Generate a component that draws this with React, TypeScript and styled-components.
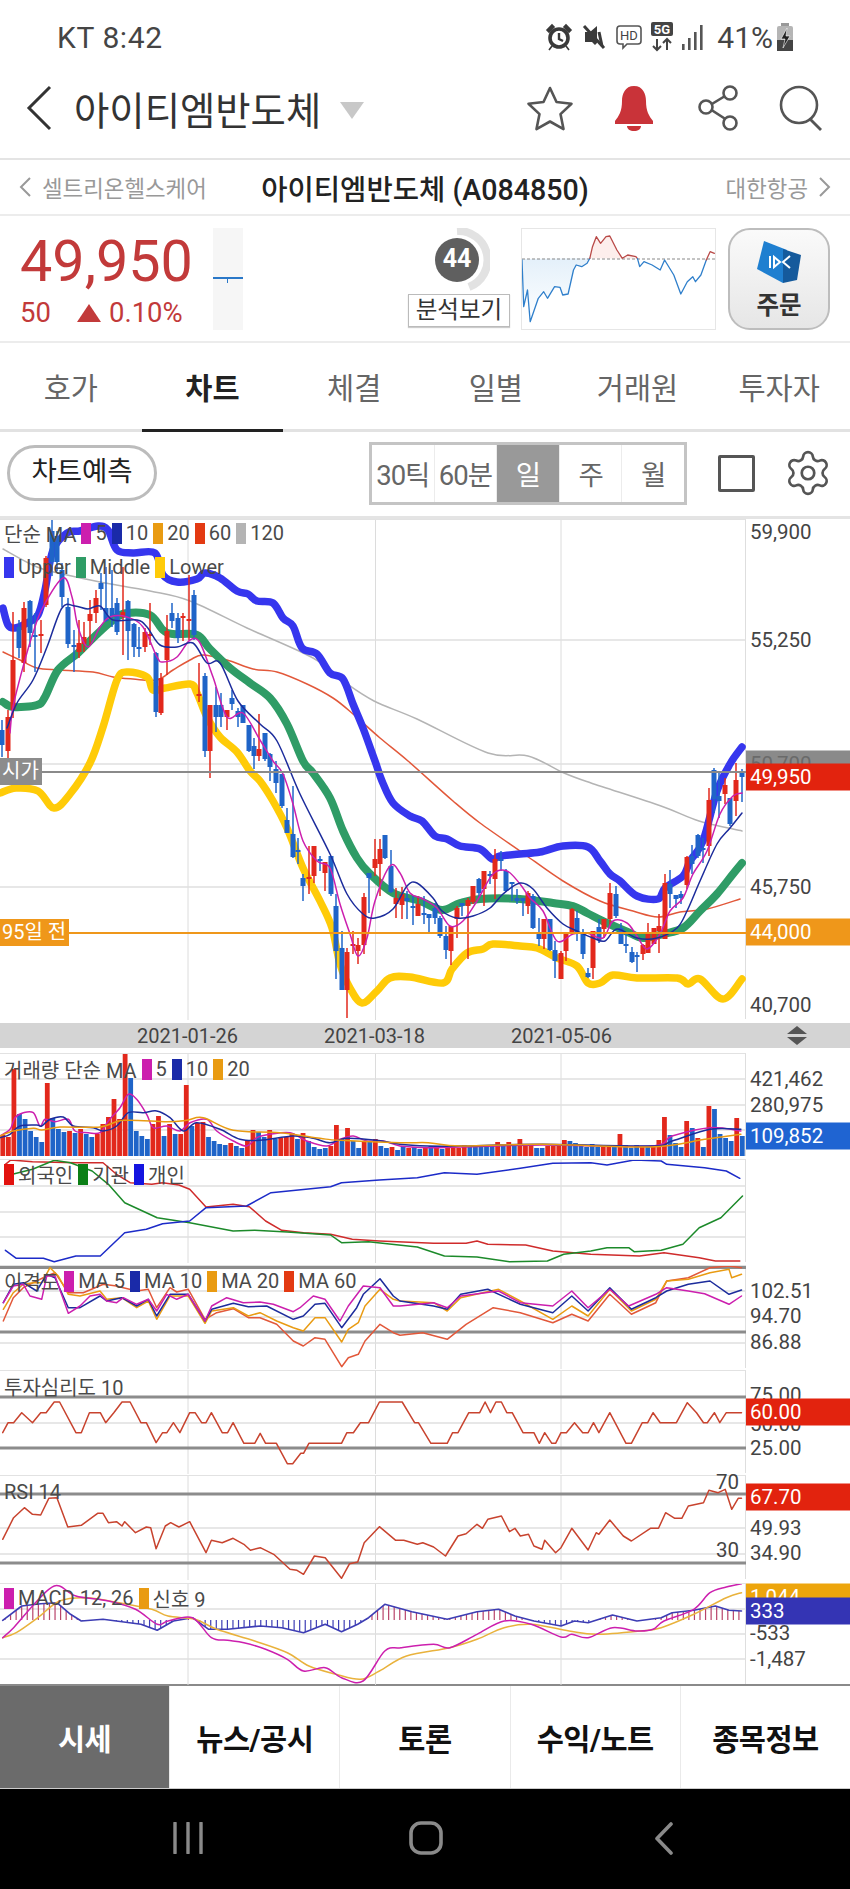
import React from 'react';
import styled, { createGlobalStyle } from 'styled-components';
import { Settings } from 'lucide-react';

const GlobalStyle = createGlobalStyle`
  html, body {
    margin: 0;
    padding: 0;
    background: #fff;
  }
  * { box-sizing: border-box; }
  #root {
    width: 850px;
    height: 1889px;
    overflow: hidden;
    font-family: Roboto, "Noto Sans CJK KR", sans-serif;
  }
`;

// ---- chart data, traced in page pixels ----

const trace = (ox: number, oy: number, sx: number, sy: number, s: string) =>
  s.trim().split(/\s+/).map(p => {
    const [x, y] = p.split(',').map(Number);
    return `${(ox + x / sx).toFixed(1)},${(oy + y / sy).toFixed(1)}`;
  }).join(' ');
const wide = (oy: number, s: string) => trace(0, oy, 1.845, 3, s);

// catmull-rom through the traced points, the moving averages are curves in the app
const smooth = (s: string) => {
  const pts = s.trim().split(/\s+/).map(p => p.split(',').map(Number));
  let d = `M${pts[0][0]} ${pts[0][1]}`;
  for (let i = 0; i < pts.length - 1; i++) {
    const p0 = pts[i - 1] ?? pts[i];
    const p1 = pts[i];
    const p2 = pts[i + 1];
    const p3 = pts[i + 2] ?? p2;
    const c1 = [p1[0] + (p2[0] - p0[0]) / 6, p1[1] + (p2[1] - p0[1]) / 6];
    const c2 = [p2[0] - (p3[0] - p1[0]) / 6, p2[1] - (p3[1] - p1[1]) / 6];
    d += `C${c1[0].toFixed(1)} ${c1[1].toFixed(1)} ${c2[0].toFixed(1)} ${c2[1].toFixed(1)} ${p2[0]} ${p2[1]}`;
  }
  return d;
};

const UPPER = `3,607 8,624 15,627 27,622 38,614 45,589 53,549 67,532 80,530 98,525 108,529 117,549 133,552 155,552 163,574 177,581 197,578 205,572 220,577 237,590 248,593 257,600 273,602 283,617 293,625 302,647 317,653 330,672 343,678 353,703 363,727 375,760 382,780 393,802 410,815 422,820 435,835 447,838 460,845 480,848 492,858 500,855 520,853 540,851 563,845 588,846 600,860 610,873 620,880 637,895 658,898 665,887 683,875 690,860 703,840 717,790 730,763 742,746`;
const MIDDLE = `3,701 13,706 37,704 45,696 58,669 78,652 93,637 113,619 127,612 150,614 163,629 173,633 197,634 210,648 230,667 250,682 270,697 287,723 303,760 313,772 330,797 343,830 357,857 370,873 393,892 420,900 442,909 460,902 480,898 520,898 553,902 573,905 587,912 607,922 630,932 643,937 663,933 683,927 700,910 717,893 733,873 742,862`;
const LOWER = `0,792 16,787 38,790 54,807 70,793 90,762 103,726 117,679 127,671 147,676 153,689 165,687 190,683 197,692 207,716 220,736 237,751 250,770 260,780 273,800 287,827 303,867 320,900 332,927 340,963 350,987 362,1002 377,990 390,977 410,976 443,982 452,968 467,952 483,948 493,943 520,945 537,947 557,957 577,965 588,982 600,982 613,974 637,977 677,977 688,983 700,978 723,998 742,978`;
const MA60 = `3,651 20,659 37,667 60,669 93,671 113,676 133,678 157,679 173,669 190,659 203,654 227,659 253,668 277,671 307,683 333,697 353,713 380,737 408,760 453,800 480,822 520,850 527,855 563,880 600,900 633,910 658,916 680,911 707,908 740,898`;
const MA120 = `3,548 37,566 67,574 100,581 150,590 190,600 247,627 313,657 343,680 374,700 417,718 488,752 528,755 564,772 591,782 661,805 699,820 742,830`;
const MA5 = `10,732 13,706 23,666 33,632 43,606 63,577 72,596 78,626 88,646 100,626 110,616 127,616 143,626 157,656 163,661 177,656 190,639 200,642 213,676 227,716 243,712 260,739 273,760 283,773 293,803 303,840 317,860 330,867 340,903 350,933 358,955 367,937 375,900 390,865 400,872 410,892 423,898 437,907 450,925 463,920 477,900 493,873 507,870 520,883 530,897 543,910 557,940 573,933 587,932 603,937 613,920 627,922 637,935 647,948 660,933 670,910 683,897 693,873 707,850 720,813 733,795 742,792`;
const MA10 = `7,727 17,702 33,679 47,646 62,607 75,605 88,608 100,605 113,619 137,619 147,626 160,644 177,646 193,642 207,662 220,662 238,700 260,723 277,740 300,793 330,853 347,893 363,913 375,917 393,908 407,885 417,882 433,897 442,910 457,917 473,915 490,907 503,893 520,882 533,888 547,907 563,923 577,930 593,937 605,940 617,928 637,937 657,937 677,927 687,910 700,880 717,843 730,827 742,812`;

const CANDLES = `
b 2 729 744 719 756|r 8 716 750 709 764|r 13 659 709 611 717|b 19 626 647 619 657|r 24 607 662 601 671
b 30 600 632 599 646|b 35 634 635 612 671|r 41 633 635 619 652|r 46 557 604 555 606|b 52 530 561 519 575
b 57 535 561 530 570|b 62 569 596 562 606|b 68 606 643 597 647|b 74 644 646 629 671|r 79 642 651 619 657
r 84 636 643 621 651|r 90 613 620 599 644|r 96 597 612 589 622|b 101 582 588 572 609|b 106 607 620 566 621
b 112 607 616 569 626|b 117 602 631 597 634|r 123 611 616 566 654|b 128 600 630 599 659|b 134 623 646 622 656
b 139 646 647 626 656|r 145 631 646 627 651|r 150 633 635 602 644|b 156 652 711 651 716|r 161 677 712 672 714
r 167 630 659 614 674|b 172 612 620 602 627|b 178 617 637 612 642|r 183 615 616 612 640|r 189 618 619 574 639
b 194 594 634 589 639|r 199 693 695 662 701|b 205 675 750 672 756|r 210 704 750 704 777|b 216 704 716 686 731
b 221 704 716 692 726|r 227 709 716 709 729|b 232 697 703 689 709|b 238 710 716 707 726|b 243 704 722 704 722
b 249 724 750 724 751|b 254 745 755 737 768|r 259 748 755 713 760|b 265 732 758 732 760|b 270 753 766 752 780
b 276 768 782 760 792|b 282 773 805 773 807|b 287 819 832 807 832|b 293 833 856 785 857|b 298 849 851 837 863
b 303 877 885 873 900|r 309 876 878 845 893|r 314 845 875 845 882|b 320 858 859 855 870|r 325 861 872 861 890
b 331 855 893 855 895|b 336 905 950 893 978|b 342 947 989 930 989|r 347 951 989 947 1017|r 353 943 945 930 953
r 358 944 950 937 963|r 364 896 944 892 953|b 369 872 877 872 912|r 375 858 867 838 875|r 380 848 863 838 895
b 385 834 857 834 858|b 391 865 891 849 892|r 396 897 903 887 917|r 402 893 904 886 918|b 407 897 900 890 918
b 413 905 907 895 924|r 418 903 915 895 915|b 424 912 913 895 923|b 429 913 917 913 932|b 435 907 917 902 923
b 440 917 935 915 937|b 446 935 949 925 958|r 451 925 950 925 964|r 457 907 918 905 937|b 462 902 905 902 915
r 468 899 905 897 958|r 473 885 901 885 903|b 479 878 892 877 897|r 484 870 888 870 905|b 490 873 874 870 883
r 495 858 878 848 898|b 501 858 859 850 870|b 506 870 890 868 891|b 512 881 883 881 900|b 517 897 900 888 903
b 523 897 900 897 915|r 528 892 905 890 913|b 533 895 927 893 928|b 539 932 938 917 945|r 544 918 938 918 948
b 550 918 949 918 950|b 555 949 960 940 977|r 561 952 978 950 978|r 566 933 950 932 960|r 572 908 932 907 932
b 577 917 932 910 940|b 583 933 953 928 958|b 588 972 976 967 977|r 593 930 967 930 978|b 599 926 939 918 942
r 604 918 928 918 937|r 610 892 918 882 925|b 616 893 915 885 917|b 621 927 943 922 943|b 626 943 944 933 952
b 632 951 961 946 962|b 637 954 955 951 971|r 643 944 953 943 959|r 648 933 952 922 952|r 654 927 943 927 943
r 659 925 930 913 952|r 665 882 938 873 938|b 670 883 893 869 907|b 676 894 898 894 907|b 681 893 897 890 903
r 687 856 884 855 888|b 692 855 863 844 873|b 698 834 855 833 857|b 703 847 848 837 862|r 709 799 845 787 855
b 714 769 798 767 812|b 719 795 800 770 817|r 725 784 793 777 803|b 730 797 823 797 825|r 736 779 800 762 815
b 742 772 776 768 801`;

const candles = CANDLES.trim().split(/[|\n]/).map(row => {
  const [c, ...n] = row.trim().split(' ');
  const [x, top, bottom, high, low] = n.map(Number);
  return { up: c === 'r', x, top, bottom, high, low };
});

// positive: red bar, negative: blue bar
const VOLUME = [
  21, 19, 87, -42, -37, -25, -19, -14, 73, -38, -27, -24, 25, -23, 27, -22, -19, 22, 32, 39, 57, 37, 102, -78,
  -25, -20, -17, 32, 40, -20, 32, -22, 22, 71, -30, 33, 34, -19, -15, -12, -11, 13, -10, -8, 15, 26, -24, -19,
  26, -17, 18, 19, 23, -17, 23, -15, -9, -7, -8, 10, 31, -17, 28, -15, -8, 15, -15, 17, -10, -8, 9, -6,
  -10, 8, -9, -7, 9, -10, 9, -7, 8, 8, 8, 11, -10, -10, -11, -11, -10, 14, -11, 14, -11, 17, 12, 11, -8, -8,
  10, 10, 12, 16, -15, -13, -11, -9, -12, -9, 10, 10, -9, 22, -11, -8, -11, 10, -10, 10, 16, 39, -21, -13,
  -9, 35, -28, 18, -9, 50, -47, -22, -18, -15, 38, -20,
];

const VOL_MA = {
  magenta: trace(0, 1050, 3, 3, '0,255 30,235 45,200 70,185 100,185 120,225 135,205 165,212 205,205 225,240 265,245 300,245 325,210 360,170 385,130 410,145 440,190 460,230 500,225 540,240 570,215 620,205 650,240 700,270 740,285 770,260 810,250 870,245 920,270 980,285 1020,265 1060,255 1100,270 1150,270 1200,285')
    + ' ' + wide(1040, '790,320 850,318 1000,312 1200,315 1240,285 1310,260 1367,270'),
  navy: trace(0, 1050, 3, 3, '0,260 30,250 60,225 110,222 125,225 150,205 190,198 220,225 280,230 310,240 350,225 385,185 430,185 470,180 510,200 550,240 590,215 660,235 720,265 780,268 880,255 940,262 990,275 1040,262 1130,268 1200,280')
    + ' ' + wide(1040, '790,315 850,315 1000,310 1200,315 1240,300 1310,265 1367,265'),
  orange: trace(0, 1050, 3, 3, '0,255 40,240 100,232 125,237 180,228 300,228 370,208 500,212 560,208 610,200 700,238 840,245 960,262 1020,268 1200,275')
    + ' ' + wide(1040, '790,305 850,315 1000,310 1200,318 1300,295 1367,280'),
};

const INV_FOREIGN = wide(1040, '10,370 20,357 60,362 140,365 190,365 215,400 240,425 280,430 300,425 330,432 350,445 380,498 430,490 460,497 490,540 520,568 560,575 610,580 650,595 700,600 800,607 860,607 880,600 900,610 970,612 1020,630 1090,640 1180,645 1225,635 1290,650 1320,660 1365,660');
const INV_INST = wide(1040, '10,405 60,385 100,358 130,365 170,390 200,430 230,485 290,530 350,545 430,570 470,568 530,573 610,582 630,605 680,602 770,618 820,645 880,648 940,662 1010,660 1040,640 1090,630 1120,620 1160,620 1170,632 1220,628 1260,610 1290,560 1330,530 1370,465');
const INV_RETAIL = wide(1040, '10,628 30,652 80,652 100,662 140,645 185,645 230,575 270,565 300,548 350,540 380,500 455,495 500,455 610,437 630,425 700,417 770,410 820,395 880,400 960,382 1020,367 1090,365 1120,372 1170,357 1220,360 1230,370 1300,380 1340,390 1365,412');

const left = (s: string) => trace(0, 1265, 3, 3, s);
const DISP_5 = left('10,110 40,60 70,55 90,90 125,100 140,30 165,30 205,142 240,120 270,90 300,85 320,105 350,110 370,95 410,115 445,100 470,135 500,85 530,100 565,85 615,165 635,120 680,95 730,110 780,108 820,115 880,137 900,125 940,90 975,100 1020,165 1045,120 1090,60 1140,65 1180,120 1200,120')
  + ' ' + wide(1280, '800,65 825,80 850,45 920,30 960,65 1020,75 1055,30 1085,80 1125,25 1160,75 1210,40 1230,20 1270,30 1300,38 1345,70 1368,45');
const DISP_10 = left('10,110 40,55 70,50 110,75 140,25 165,35 205,125 240,125 300,90 320,105 365,95 410,120 445,100 470,150 510,85 565,85 615,165 635,130 700,112 745,122 800,120 880,160 910,150 945,115 975,112 1025,185 1070,125 1090,85 1140,38 1180,90 1200,105')
  + ' ' + wide(1280, '800,75 825,85 850,40 900,25 960,70 1020,95 1055,45 1085,90 1125,20 1165,85 1210,50 1230,30 1270,10 1310,0 1345,40 1368,27');
const DISP_20 = left('10,130 40,80 70,55 100,50 125,50 150,5 175,30 205,85 240,90 300,75 320,100 365,95 410,125 445,105 470,160 510,90 565,90 615,172 635,135 700,125 745,150 780,140 830,165 880,185 910,195 945,155 975,155 1025,228 1045,190 1075,170 1095,120 1140,70 1180,100 1200,105')
  + ' ' + wide(1280, '800,65 825,90 850,50 920,25 960,60 1020,115 1055,75 1085,105 1125,25 1165,90 1210,55 1230,0 1270,-5 1310,-25 1345,-35 1350,-10 1368,-20');
const DISP_60 = left('10,165 40,95 70,65 100,50 140,30 165,20 205,80 250,80 310,55 350,60 370,65 410,75 445,70 470,125 510,65 530,78 565,70 615,160 650,140 700,128 745,155 780,155 830,175 880,225 910,240 945,215 975,220 1025,302 1045,275 1075,265 1095,225 1140,175 1180,200 1200,208')
  + ' ' + wide(1280, '780,155 825,175 860,130 910,80 960,95 1020,125 1055,100 1085,120 1125,40 1165,100 1210,65 1230,0 1270,-10 1310,-40 1345,-45 1368,-40');

const SENTIMENT = wide(1280, '5,455 15,425 25,425 40,395 60,425 75,395 85,395 100,363 110,363 140,455 150,455 165,395 185,395 195,425 210,395 225,363 240,363 260,425 270,425 288,485 300,455 308,455 320,425 332,455 350,395 360,395 372,425 380,425 390,395 410,455 420,455 430,425 450,487 470,487 480,457 490,487 510,487 530,548 540,548 555,517 560,517 570,487 630,487 640,455 652,455 665,425 680,425 700,363 742,363 765,425 772,425 795,487 825,487 835,455 845,455 865,395 885,395 895,363 905,395 915,363 925,363 935,395 945,395 965,455 985,455 995,487 1005,455 1018,487 1025,487 1035,455 1045,455 1060,425 1075,455 1085,455 1095,425 1105,455 1125,395 1155,487 1165,487 1185,425 1195,425 1205,395 1218,425 1248,425 1268,365 1285,395 1298,425 1305,425 1318,395 1328,425 1340,395 1368,395');
const RSI = wide(1280, '5,775 25,710 45,680 60,700 75,702 90,652 105,650 125,738 150,733 180,697 190,697 200,725 215,722 225,735 230,722 250,755 270,738 278,740 288,803 305,735 315,725 330,738 350,722 380,815 390,778 410,785 430,772 450,790 462,808 480,800 505,820 535,865 548,868 560,880 580,825 600,830 630,892 645,848 660,843 672,785 700,737 730,778 745,778 770,790 780,785 800,798 822,825 845,765 860,758 880,730 890,742 900,715 925,705 940,752 950,742 960,765 975,760 985,795 1000,805 1005,778 1025,815 1035,800 1055,742 1085,807 1100,755 1105,760 1125,717 1150,765 1165,780 1200,742 1215,742 1228,695 1245,712 1258,712 1270,675 1298,665 1308,628 1325,635 1338,625 1350,685 1362,652 1368,652');

const MACD = wide(1280, '5,1070 25,1040 60,975 90,925 110,915 140,945 200,960 250,985 290,1030 310,1020 355,1010 390,1070 420,1078 450,1085 490,1105 530,1135 560,1170 600,1160 630,1190 670,1200 710,1110 740,1100 800,1090 830,1100 880,1060 930,1020 980,1030 1035,1068 1055,1060 1085,1070 1130,1040 1175,1050 1205,1045 1225,1020 1280,985 1310,935 1340,918 1368,908');
const SIGNAL = wide(1280, '5,1070 30,1055 70,1010 110,960 160,950 220,965 280,985 310,1005 360,1015 400,1045 470,1080 530,1115 570,1155 620,1180 665,1195 700,1170 750,1125 830,1100 880,1075 930,1040 980,1030 1050,1050 1100,1060 1180,1050 1220,1040 1280,1000 1340,950 1368,935');
const OSC = wide(1280, '5,1018 40,975 75,968 105,965 130,1000 150,1020 190,1015 260,1030 290,1048 320,1020 355,1010 385,1045 420,1045 480,1035 520,1040 560,1055 600,1030 630,1052 660,1030 680,1010 710,970 760,992 825,1015 880,992 920,985 950,1005 985,1020 1035,1035 1060,1020 1085,1025 1130,1002 1175,1020 1220,1010 1240,995 1280,988 1320,975 1345,988 1368,990');

const MACD_ZERO = 1619;
const oscAt = (x: number) => {
  const pts = OSC.split(' ').map(p => p.split(',').map(Number));
  for (let i = 1; i < pts.length; i++) {
    if (x <= pts[i][0]) {
      const [x0, y0] = pts[i - 1];
      const [x1, y1] = pts[i];
      return y0 + ((y1 - y0) * (x - x0)) / (x1 - x0);
    }
  }
  return pts[pts.length - 1][1];
};
const oscBars = Array.from({ length: 133 }, (_, i) => 5 + i * 5.56);

// ---- styled parts ----

const Page = styled.div`
  width: 850px;
  height: 1889px;
  display: flex;
  flex-direction: column;
  background: #fff;
  color: #333;
`;

const StatusBar = styled.div`
  height: 60px;
  padding: 14px 56px 0 57px;
  display: flex;
  align-items: center;
  font-size: 30px;
  letter-spacing: 0.6px;
  color: #454545;
`;

const StatusIcons = styled.div`
  margin-left: auto;
  display: flex;
  align-items: center;
  letter-spacing: 0;
`;

const StatusIcon = styled.svg<{ $ml?: number }>`
  display: block;
  margin-left: ${p => p.$ml ?? 0}px;
`;

const StatusText = styled.span`
  margin-left: 13px;
  font-size: 30px;
`;

const Header = styled.div`
  height: 100px;
  padding: 0 27px 2px 26px;
  display: flex;
  align-items: center;
  border-bottom: 2px solid #e4e4e4;
`;

const Title = styled.div`
  margin-left: 22px;
  font-size: 38.4px;
  color: #333;
  white-space: nowrap;
`;

const Caret = styled.div`
  margin-left: 19px;
  margin-top: 4px;
  width: 0;
  height: 0;
  border-left: 12px solid transparent;
  border-right: 12px solid transparent;
  border-top: 17px solid #c8c8c8;
`;

const HeaderIcons = styled.div`
  margin-left: auto;
  display: flex;
  align-items: center;
`;

const HeaderIcon = styled.svg<{ $ml?: number }>`
  display: block;
  margin-left: ${p => p.$ml ?? 0}px;
`;

const SubHeader = styled.div`
  height: 56px;
  padding: 0 19px;
  display: flex;
  align-items: center;
  border-bottom: 2px solid #ececec;
`;

const SubSide = styled.div<{ $right?: boolean }>`
  width: 210px;
  flex: none;
  display: flex;
  align-items: center;
  justify-content: ${p => (p.$right ? 'flex-end' : 'flex-start')};
  gap: 11px;
  font-size: 22.4px;
  color: #999;
  white-space: nowrap;
`;

const SubTitle = styled.div`
  flex: 1;
  text-align: center;
  font-size: 28.6px;
  font-weight: 500;
  color: #222;
  white-space: nowrap;
`;

const PriceRow = styled.div`
  height: 127px;
  padding: 12px 20px 0 20px;
  display: flex;
  align-items: flex-start;
  border-bottom: 2px solid #ececec;
`;

const PriceBlock = styled.div`
  width: 172px;
  color: #c23a3a;
`;

const PriceValue = styled.div`
  font-size: 57.5px;
  line-height: 62px;
  margin-top: 3px;
  white-space: nowrap;
`;

const PriceChange = styled.div`
  margin-top: 5px;
  display: flex;
  align-items: center;
  font-size: 27.5px;
  line-height: 30px;
  white-space: nowrap;
`;

const UpTriangle = styled.span`
  margin-left: 26px;
  margin-right: 8px;
  width: 0;
  height: 0;
  border-left: 12px solid transparent;
  border-right: 12px solid transparent;
  border-bottom: 18px solid #c23a3a;
`;

const MiniCandle = styled.div`
  position: relative;
  margin-left: 21px;
  width: 30px;
  height: 102px;
  background: #f6f6f6;
  &::before {
    content: '';
    position: absolute;
    left: 0;
    right: 0;
    top: 49px;
    height: 2px;
    background: #2a78c8;
  }
  &::after {
    content: '';
    position: absolute;
    left: 14px;
    top: 50px;
    width: 1px;
    height: 5px;
    background: #2a78c8;
  }
`;

const AnalysisBlock = styled.div`
  margin-left: auto;
  width: 102px;
  display: flex;
  flex-direction: column;
  align-items: center;
`;

const Gauge = styled.div`
  position: relative;
  width: 62px;
  height: 66px;
`;

const GaugeText = styled.span`
  position: absolute;
  left: 0;
  top: 16px;
  width: 44px;
  margin-left: 7px;
  text-align: center;
  font-size: 25px;
  line-height: 30px;
  font-weight: 700;
  color: #fff;
`;

const AnalysisButton = styled.div`
  width: 102px;
  height: 33px;
  border: 1px solid #bbb;
  box-shadow: 0 1px 1px #ccc;
  font-size: 23.5px;
  line-height: 31px;
  text-align: center;
  color: #333;
  white-space: nowrap;
`;

const MiniChartBox = styled.div`
  margin-left: 11px;
  width: 195px;
  height: 102px;
  border: 1px solid #e6e6e6;
`;

const OrderButton = styled.div`
  margin-left: 12px;
  width: 102px;
  height: 102px;
  border: 2px solid #bdbdbd;
  border-radius: 22px;
  background: linear-gradient(#fafafa, #e6e6e6);
  display: flex;
  flex-direction: column;
  align-items: center;
  padding-top: 11px;
  font-size: 24.5px;
  font-weight: 700;
  color: #333;
`;

const OrderText = styled.span`
  margin-top: 8px;
  line-height: 30px;
`;

const Tabs = styled.div`
  height: 89px;
  display: flex;
  border-bottom: 3px solid #e2e2e2;
`;

const Tab = styled.div<{ $active?: boolean }>`
  position: relative;
  flex: 1;
  display: flex;
  align-items: center;
  justify-content: center;
  font-size: 29.5px;
  font-weight: ${p => (p.$active ? 700 : 400)};
  color: ${p => (p.$active ? '#222' : '#666')};
  &::after {
    content: '';
    display: ${p => (p.$active ? 'block' : 'none')};
    position: absolute;
    left: 0;
    right: 0;
    bottom: -3px;
    height: 3px;
    background: #222;
  }
`;

const Toolbar = styled.div`
  height: 87px;
  padding: 0 17px 2px 7px;
  display: flex;
  align-items: center;
  border-bottom: 3px solid #e4e4e4;
`;

const PillButton = styled.div`
  width: 150px;
  height: 56px;
  border: 3px solid #bcbcbc;
  border-radius: 28px;
  text-align: center;
  font-size: 27.5px;
  line-height: 48px;
  color: #222;
`;

const Segment = styled.div`
  margin-left: auto;
  width: 318px;
  height: 63px;
  border: 3px solid #c4c4c4;
  display: flex;
`;

const SegmentCell = styled.div<{ $active?: boolean }>`
  flex: 1;
  display: flex;
  align-items: center;
  justify-content: center;
  font-size: 27.5px;
  white-space: nowrap;
  letter-spacing: -1px;
  color: ${p => (p.$active ? '#fff' : '#666')};
  background: ${p => (p.$active ? '#999' : '#fff')};
  border-left: 1px solid #ececec;
  &:first-child { border-left: 0; }
`;

const ScreenBox = styled.div`
  margin-left: 31px;
  width: 37px;
  height: 37px;
  border: 3px solid #555;
  border-radius: 2px;
`;

const GearIcon = styled(Settings)`
  display: block;
  margin-left: 28px;
  color: #555;
`;

const PlotRow = styled.div<{ $mt?: number }>`
  margin-top: ${p => p.$mt ?? 0}px;
  display: flex;
  flex: none;
`;

const Plot = styled.div<{ $h: number }>`
  position: relative;
  width: 746px;
  height: ${p => p.$h}px;
  border-right: 1px solid #dedede;
  border-top: 1px solid #e2e2e2;
`;

const PlotSvg = styled.svg`
  position: absolute;
  left: 0;
  top: 0;
  display: block;
`;

const Axis = styled.div`
  position: relative;
  flex: 1;
  font-size: 20.5px;
  color: #444;
`;

const AxisLabel = styled.span<{ $y: number; $bg?: string; $c?: string }>`
  position: absolute;
  left: 0;
  right: 0;
  top: ${p => p.$y}px;
  height: 27px;
  padding-left: 4px;
  line-height: 27px;
  transform: translateY(-50%);
  white-space: nowrap;
  overflow: hidden;
  background: ${p => p.$bg ?? 'transparent'};
  color: ${p => p.$c ?? (p.$bg ? '#fff' : '#444')};
`;

const SideTag = styled.span<{ $y: number; $bg: string }>`
  position: absolute;
  left: 0;
  top: ${p => p.$y}px;
  height: 27px;
  padding: 0 3px 0 2px;
  font-size: 20px;
  line-height: 27px;
  background: ${p => p.$bg};
  color: #fff;
  white-space: nowrap;
`;

const PlotNote = styled.span<{ $y: number }>`
  position: absolute;
  right: 6px;
  top: ${p => p.$y}px;
  font-size: 20.5px;
  line-height: 24px;
  color: #444;
`;

const Legend = styled.div<{ $y: number }>`
  position: absolute;
  left: 4px;
  top: ${p => p.$y}px;
  height: 24px;
  display: flex;
  align-items: center;
  gap: 4px;
  font-size: 20px;
  color: #4a4a4a;
  white-space: nowrap;
`;

const Swatch = styled.span<{ $c: string }>`
  flex: none;
  width: 10px;
  height: 21px;
  background: ${p => p.$c};
`;

const LegendText = styled.span`
  margin-right: 1px;
`;

const DateBar = styled.div`
  margin-top: 4px;
  height: 25px;
  padding-left: 94px;
  display: flex;
  align-items: center;
  background: #d4d4d4;
  font-size: 20px;
  color: #444;
`;

const DateCell = styled.span`
  width: 187px;
  text-align: center;
`;

const ScrollHandle = styled.svg`
  display: block;
  margin-left: 131px;
`;

const BottomTabs = styled.div`
  height: 105px;
  margin-top: auto;
  display: flex;
  border-top: 2px solid #8a8a8a;
  border-bottom: 1px solid #ccc;
`;

const BottomTab = styled.div<{ $active?: boolean }>`
  flex: 1;
  display: flex;
  align-items: center;
  justify-content: center;
  font-size: 29.5px;
  font-weight: 700;
  white-space: nowrap;
  letter-spacing: -0.5px;
  color: ${p => (p.$active ? '#fff' : '#111')};
  background: ${p => (p.$active ? '#6b6b6b' : '#fff')};
  border-left: 1px solid #eaeaea;
  &:first-child { border-left: 0; }
`;

const NavBar = styled.div`
  height: 100px;
  padding: 0 0 2px 69px;
  display: flex;
  align-items: center;
  background: #000;
`;

const NavSlot = styled.div`
  width: 238px;
  display: flex;
  justify-content: center;
`;

// ---- small pieces ----

const C = {
  magenta: '#cc1fae',
  navy: '#1c2c9c',
  amber: '#e99b12',
  red: '#e33a12',
  grey: '#b4b4b4',
  band: '#3636ee',
  green: '#2f9c66',
  yellow: '#ffcb08',
  up: '#e2281c',
  down: '#1f64c8',
  heavy: '#8c8c8c',
  grid: '#dfdfdf',
};

const Line: React.FC<{ points: string; c: string; w?: number }> = ({ points, c, w = 1.5 }) => (
  <polyline points={points} fill="none" stroke={c} strokeWidth={w} strokeLinejoin="round" strokeLinecap="round" />
);

const Curve: React.FC<{ points: string; c: string; w?: number }> = ({ points, c, w = 1.5 }) => (
  <path d={smooth(points)} fill="none" stroke={c} strokeWidth={w} strokeLinejoin="round" strokeLinecap="round" />
);

const HRule: React.FC<{ y: number; c?: string; w?: number }> = ({ y, c = C.grid, w = 1.5 }) => (
  <line x1={0} x2={746} y1={y} y2={y} stroke={c} strokeWidth={w} />
);

const VGrid: React.FC<{ top: number; h: number }> = ({ top, h }) => (
  <>
    {[188, 375.5, 561].map(x => (
      <line key={x} x1={x} x2={x} y1={top} y2={top + h} stroke="#dcdcdc" strokeWidth={1} />
    ))}
  </>
);

interface AxisItem {
  text: string;
  y: number;
  bg?: string;
  c?: string;
}

interface LegendItem {
  swatch?: string;
  text?: string;
}

interface PanelProps {
  top: number;
  h: number;
  mt?: number;
  grid?: number[];
  axis: AxisItem[];
  legends: { y: number; items: LegendItem[] }[];
  overlay?: React.ReactNode;
  children: React.ReactNode;
}

const Panel: React.FC<PanelProps> = ({ top, h, mt, grid = [], axis, legends, overlay, children }) => (
  <PlotRow $mt={mt}>
    <Plot $h={h}>
      <PlotSvg width={746} height={h} viewBox={`0 ${top} 746 ${h}`}>
        <VGrid top={top} h={h} />
        {grid.map(y => <HRule key={y} y={y} />)}
        {children}
      </PlotSvg>
      {legends.map(l => (
        <Legend key={l.y} $y={l.y - top - 12}>
          {l.items.map((it, i) => (
            <React.Fragment key={i}>
              {it.swatch && <Swatch $c={it.swatch} />}
              {it.text && <LegendText>{it.text}</LegendText>}
            </React.Fragment>
          ))}
        </Legend>
      ))}
      {overlay}
    </Plot>
    <Axis>
      {axis.map(a => (
        <AxisLabel key={a.text} $y={a.y - top} $bg={a.bg} $c={a.c}>{a.text}</AxisLabel>
      ))}
    </Axis>
  </PlotRow>
);

const AlarmIcon = () => (
  <StatusIcon width={28} height={28} viewBox="0 0 26 28">
    <circle cx="13" cy="15" r="9" fill="none" stroke="#3a3a3a" strokeWidth="3.6" />
    <path d="M13 10v6l4 2" fill="none" stroke="#3a3a3a" strokeWidth="2.4" />
    <path d="M1 7l5-5 2 2-5 5zM25 7l-5-5-2 2 5 5zM6 23l-3 4M20 23l3 4" fill="#3a3a3a" stroke="#3a3a3a" strokeWidth="1.6" />
  </StatusIcon>
);

const MuteIcon = () => (
  <StatusIcon $ml={9} width={24} height={26} viewBox="0 0 24 26">
    <path d="M3 8h5l7-6v17l-2 2-3-3H3z" fill="#3a3a3a" />
    <path d="M2 2l20 22" stroke="#3a3a3a" strokeWidth="3" />
    <path d="M17 8l3 14" stroke="#3a3a3a" strokeWidth="3" />
  </StatusIcon>
);

const HdIcon = () => (
  <StatusIcon $ml={9} width={28} height={28} viewBox="0 0 28 28">
    <path d="M5 3h18a3 3 0 0 1 3 3v12a3 3 0 0 1-3 3H12l-4 4v-4H5a3 3 0 0 1-3-3V6a3 3 0 0 1 3-3z" fill="none" stroke="#555" strokeWidth="1.6" />
    <text x="14" y="17" textAnchor="middle" fontSize="13" fontFamily="Roboto, sans-serif" fill="#444">HD</text>
  </StatusIcon>
);

const FiveGIcon = () => (
  <StatusIcon $ml={8} width={22} height={30} viewBox="0 0 22 30">
    <rect x="0" y="0" width="22" height="14" rx="2" fill="#444" />
    <text x="11" y="12" textAnchor="middle" fontSize="13" fontWeight="700" fontFamily="Roboto, sans-serif" fill="#fff">5G</text>
    <path d="M6 17v11M2 24l4 4 4-4M16 28V17M12 21l4-4 4 4" fill="none" stroke="#444" strokeWidth="2" />
  </StatusIcon>
);

const SignalIcon = () => (
  <StatusIcon $ml={9} width={22} height={26} viewBox="0 0 22 26">
    <rect x="0" y="20" width="2.6" height="6" fill="#555" />
    <rect x="6" y="14" width="2.6" height="12" fill="#555" />
    <rect x="12" y="8" width="2.6" height="18" fill="#555" />
    <rect x="18" y="1" width="2.6" height="25" fill="#555" />
  </StatusIcon>
);

const BatteryIcon = () => (
  <StatusIcon $ml={3} width={18} height={28} viewBox="0 0 18 28">
    <rect x="5" y="0" width="8" height="3" fill="#999" />
    <rect x="1" y="3" width="16" height="25" rx="2" fill="#b5b5b5" />
    <rect x="1" y="17" width="16" height="11" fill="#444" />
    <path d="M11 5l-6 11h4l-2 9 7-12h-4z" fill="#222" stroke="#fff" strokeWidth="0.6" />
  </StatusIcon>
);

const MiniChart = () => {
  const z = (s: string) => trace(-523, -229, 1.845, 3, s);
  const blueA = z('965,780 968,920 975,870 980,965 995,895 1005,875 1012,895 1025,860 1035,862 1040,885 1050,882 1060,810 1065,795 1075,800 1085,790 1090,775');
  const redA = z('1090,775 1095,740 1102,710 1110,730 1120,710 1127,708 1140,750 1150,775 1160,765 1175,770 1178,776');
  const blueB = z('1178,776 1182,800 1190,785 1205,795 1220,810 1228,780 1245,825 1258,882 1270,845 1280,830 1285,845 1295,825 1305,780');
  const redB = z('1305,780 1312,755 1320,760');
  const base = 30;
  return (
    <svg width="193" height="100" viewBox="0 0 193 100" style={{ display: 'block' }}>
      <defs>
        <linearGradient id="fallFill" x1="0" y1="0" x2="0" y2="1">
          <stop offset="0" stopColor="#e4f0fa" />
          <stop offset="1" stopColor="#ffffff" />
        </linearGradient>
      </defs>
      <polygon points={`${blueA} 0,${base}`} fill="url(#fallFill)" />
      <polygon points={redA} fill="#fdeeec" />
      <line x1="0" x2="193" y1={base} y2={base} stroke="#888" strokeWidth="1" strokeDasharray="3 2" />
      <Line points={blueA} c="#2f7fcb" w={1.3} />
      <Line points={redA} c="#b94a48" w={1.3} />
      <Line points={blueB} c="#2f7fcb" w={1.3} />
      <Line points={redB} c="#b94a48" w={1.3} />
    </svg>
  );
};

// ---- page ----

export default function App() {
  return (
    <Page>
      <GlobalStyle />
      <StatusBar>
        KT 8:42
        <StatusIcons>
          <AlarmIcon />
          <MuteIcon />
          <HdIcon />
          <FiveGIcon />
          <SignalIcon />
          <StatusText>41%</StatusText>
          <BatteryIcon />
        </StatusIcons>
      </StatusBar>

      <Header>
        <svg width="26" height="46" viewBox="0 0 26 46" style={{ display: 'block' }}>
          <path d="M24 2L3 23l21 21" fill="none" stroke="#333" strokeWidth="3" />
        </svg>
        <Title>아이티엠반도체</Title>
        <Caret />
        <HeaderIcons>
          <HeaderIcon width={48} height={46} viewBox="0 0 48 46">
            <path d="M24 3l6.500 14 15 1.700-11 10.400 3 15L24 36.500 10.500 44.100l3-15-11-10.400 15-1.700z" fill="none" stroke="#555" strokeWidth="2.6" strokeLinejoin="round" />
          </HeaderIcon>
          <HeaderIcon $ml={40} width={40} height={46} viewBox="0 0 40 46">
            <path d="M20 1c9 0 12 8 12 15 0 10 3 15 7 20v3H1v-3c4-5 7-10 7-20C8 9 11 1 20 1z" fill="#c93339" />
            <path d="M13 41h14c0 3-3 5-7 5s-7-2-7-5z" fill="#c93339" />
          </HeaderIcon>
          <HeaderIcon $ml={44} width={40} height={46} viewBox="0 0 40 46">
            <path d="M32 8L9 22l23 15" fill="none" stroke="#555" strokeWidth="2.6" />
            <circle cx="32" cy="8" r="6.500" fill="#fff" stroke="#555" strokeWidth="2.6" />
            <circle cx="8" cy="22" r="6.500" fill="#fff" stroke="#555" strokeWidth="2.6" />
            <circle cx="32" cy="38" r="6.500" fill="#fff" stroke="#555" strokeWidth="2.6" />
          </HeaderIcon>
          <HeaderIcon $ml={41} width={44} height={46} viewBox="0 0 44 46">
            <circle cx="20" cy="20" r="18" fill="none" stroke="#555" strokeWidth="2.6" />
            <path d="M31 34l11 11" stroke="#555" strokeWidth="2.8" />
          </HeaderIcon>
        </HeaderIcons>
      </Header>

      <SubHeader>
        <SubSide>
          <svg width="12" height="20" viewBox="0 0 12 20"><path d="M11 1L2 10l9 9" fill="none" stroke="#999" strokeWidth="2" /></svg>
          셀트리온헬스케어
        </SubSide>
        <SubTitle>아이티엠반도체 (A084850)</SubTitle>
        <SubSide $right>
          대한항공
          <svg width="12" height="20" viewBox="0 0 12 20"><path d="M1 1l9 9-9 9" fill="none" stroke="#999" strokeWidth="2" /></svg>
        </SubSide>
      </SubHeader>

      <PriceRow>
        <PriceBlock>
          <PriceValue>49,950</PriceValue>
          <PriceChange>50<UpTriangle />0.10%</PriceChange>
        </PriceBlock>
        <MiniCandle />
        <AnalysisBlock>
          <Gauge>
            <svg width="62" height="66" viewBox="0 0 62 66" style={{ display: 'block' }}>
              <path d="M29 3a29 29 0 0 1 12 56" fill="none" stroke="#e2e2e2" strokeWidth="8" />
              <circle cx="29" cy="32" r="22" fill="#5f5f5f" />
            </svg>
            <GaugeText>44</GaugeText>
          </Gauge>
          <AnalysisButton>분석보기</AnalysisButton>
        </AnalysisBlock>
        <MiniChartBox><MiniChart /></MiniChartBox>
        <OrderButton>
          <svg width="44" height="42" viewBox="0 0 44 42" style={{ display: 'block' }}>
            <path d="M7 0l23 9-4 33L0 28z" fill="#1f7fd0" />
            <path d="M26 8l18 6-4 25-14 3z" fill="#155a9c" />
            <path d="M13 15v12M17 16v10l6-5zM33 15l-7 6 7 6" fill="none" stroke="#fff" strokeWidth="2" />
          </svg>
          <OrderText>주문</OrderText>
        </OrderButton>
      </PriceRow>

      <Tabs>
        <Tab>호가</Tab>
        <Tab $active>차트</Tab>
        <Tab>체결</Tab>
        <Tab>일별</Tab>
        <Tab>거래원</Tab>
        <Tab>투자자</Tab>
      </Tabs>

      <Toolbar>
        <PillButton>차트예측</PillButton>
        <Segment>
          <SegmentCell>30틱</SegmentCell>
          <SegmentCell>60분</SegmentCell>
          <SegmentCell $active>일</SegmentCell>
          <SegmentCell>주</SegmentCell>
          <SegmentCell>월</SegmentCell>
        </Segment>
        <ScreenBox />
        <GearIcon size={50} strokeWidth={1.3} />
      </Toolbar>

      <Panel
        top={519}
        h={500}
        grid={[639, 763, 886]}
        axis={[
          { text: '59,900', y: 532 },
          { text: '55,250', y: 640 },
          { text: '50,700', y: 764, bg: '#8a8a8a', c: '#6a6a6a' },
          { text: '49,950', y: 777, bg: '#e2230e' },
          { text: '45,750', y: 887 },
          { text: '44,000', y: 932, bg: '#ef971a' },
          { text: '40,700', y: 1005 },
        ]}
        legends={[
          {
            y: 532,
            items: [
              { text: '단순 MA' }, { swatch: C.magenta, text: '5' }, { swatch: '#1a2aa8', text: '10' },
              { swatch: C.amber, text: '20' }, { swatch: C.red, text: '60' }, { swatch: C.grey, text: '120' },
            ],
          },
          {
            y: 566,
            items: [
              { swatch: C.band, text: 'Upper' }, { swatch: C.green, text: 'Middle' }, { swatch: C.yellow, text: 'Lower' },
            ],
          },
        ]}
        overlay={
          <>
            <SideTag $y={238} $bg="#8c8c8c">시가</SideTag>
            <SideTag $y={399} $bg="#ef971a">95일 전</SideTag>
          </>
        }
      >
        <Curve points={MA120} c={C.grey} />
        <Curve points={MA60} c="#e2583a" />
        <Curve points={UPPER} c={C.band} w={7.5} />
        <Curve points={MIDDLE} c={C.green} w={8} />
        <Curve points={LOWER} c={C.yellow} w={7.5} />
        {candles.map(k => {
          const col = k.up ? C.up : C.down;
          return (
            <g key={k.x}>
              <line x1={k.x} x2={k.x} y1={k.high} y2={k.low} stroke={col} strokeWidth={1.5} />
              <rect x={k.x - 2.5} y={k.top} width={5} height={Math.max(k.bottom - k.top, 2)} fill={col} />
            </g>
          );
        })}
        <Curve points={MA5} c={C.magenta} />
        <Curve points={MA10} c={C.navy} />
        <HRule y={771} c="#8a8a8a" w={2} />
        <HRule y={932} c="#ef971a" w={2} />
      </Panel>

      <DateBar>
        <DateCell>2021-01-26</DateCell>
        <DateCell>2021-03-18</DateCell>
        <DateCell>2021-05-06</DateCell>
        <ScrollHandle width={22} height={19} viewBox="0 0 22 19">
          <path d="M11 0l10 8H1zM11 19L1 11h20z" fill="#555" />
        </ScrollHandle>
      </DateBar>

      <Panel
        top={1053}
        h={103}
        mt={5}
        grid={[1078, 1104, 1129]}
        axis={[
          { text: '421,462', y: 1079 },
          { text: '280,975', y: 1105 },
          { text: '109,852', y: 1136, bg: '#1f64d2' },
        ]}
        legends={[{
          y: 1068,
          items: [
            { text: '거래량 단순 MA' }, { swatch: C.magenta, text: '5' }, { swatch: '#1a2aa8', text: '10' }, { swatch: C.amber, text: '20' },
          ],
        }]}
      >
        {VOLUME.map((v, i) => {
          const h = Math.abs(v);
          return <rect key={i} x={0.4 + i * 5.56} y={1155 - h} width={4.8} height={h} fill={v > 0 ? C.up : C.down} />;
        })}
        <Curve points={VOL_MA.magenta} c={C.magenta} />
        <Curve points={VOL_MA.navy} c={C.navy} />
        <Curve points={VOL_MA.orange} c={C.amber} />
      </Panel>

      <Panel
        top={1159}
        h={103}
        mt={3}
        grid={[1185, 1211, 1236]}
        axis={[]}
        legends={[{
          y: 1173,
          items: [{ swatch: '#e2120e', text: '외국인' }, { swatch: '#0b7f16', text: '기관' }, { swatch: '#1414e0', text: '개인' }],
        }]}
      >
        <Line points={INV_FOREIGN} c="#cf2b2b" />
        <Line points={INV_INST} c="#1c8a2a" />
        <Line points={INV_RETAIL} c="#1c2bc8" />
      </Panel>

      <Panel
        top={1265}
        h={103}
        mt={3}
        grid={[1290, 1316, 1342]}
        axis={[
          { text: '102.51', y: 1291 },
          { text: '94.70', y: 1316 },
          { text: '86.88', y: 1342 },
        ]}
        legends={[{
          y: 1280,
          items: [
            { text: '이격도' }, { swatch: C.magenta, text: 'MA 5' }, { swatch: '#1a2aa8', text: 'MA 10' },
            { swatch: C.amber, text: 'MA 20' }, { swatch: C.red, text: 'MA 60' },
          ],
        }]}
      >
        <HRule y={1266.5} c={C.heavy} w={3} />
        <HRule y={1331} c={C.heavy} w={3} />
        <Line points={DISP_60} c="#e2583a" />
        <Line points={DISP_20} c={C.amber} />
        <Line points={DISP_10} c={C.navy} />
        <Line points={DISP_5} c={C.magenta} />
      </Panel>

      <Panel
        top={1370}
        h={103}
        mt={2}
        grid={[1422]}
        axis={[
          { text: '75.00', y: 1395 },
          { text: '50.00', y: 1424 },
          { text: '60.00', y: 1412, bg: '#e2230e' },
          { text: '25.00', y: 1448 },
        ]}
        legends={[{ y: 1385, items: [{ text: '투자심리도 10' }] }]}
      >
        <HRule y={1396} c={C.heavy} w={3} />
        <HRule y={1447} c={C.heavy} w={3} />
        <Line points={SENTIMENT} c="#c8432e" />
      </Panel>

      <Panel
        top={1475}
        h={104}
        mt={2}
        grid={[1527, 1553]}
        axis={[
          { text: '67.70', y: 1497, bg: '#e2230e' },
          { text: '49.93', y: 1528 },
          { text: '34.90', y: 1553 },
        ]}
        legends={[{ y: 1491, items: [{ text: 'RSI 14' }] }]}
        overlay={
          <>
            <PlotNote $y={-6}>70</PlotNote>
            <PlotNote $y={62}>30</PlotNote>
          </>
        }
      >
        <HRule y={1493} c={C.heavy} w={3} />
        <HRule y={1562} c={C.heavy} w={3} />
        <Line points={RSI} c="#c8432e" />
      </Panel>

      <Panel
        top={1583}
        h={101}
        mt={4}
        grid={[1608, 1633, 1658]}
        axis={[
          { text: '1,044', y: 1597, bg: '#eda50c' },
          { text: '333', y: 1611, bg: '#3434b4' },
          { text: '-533', y: 1633 },
          { text: '-1,487', y: 1659 },
        ]}
        legends={[{ y: 1597, items: [{ swatch: C.magenta, text: 'MACD 12, 26' }, { swatch: C.amber, text: '신호 9' }] }]}
      >
        {oscBars.map(x => {
          const y = oscAt(x);
          return (
            <line key={x} x1={x} x2={x} y1={MACD_ZERO} y2={y} stroke={y < MACD_ZERO ? '#b8436a' : '#3d3db4'} strokeWidth={1.2} />
          );
        })}
        <Line points={OSC} c="#3d3db4" w={1.6} />
        <Curve points={SIGNAL} c="#e9b23c" />
        <Curve points={MACD} c={C.magenta} />
      </Panel>

      <BottomTabs>
        <BottomTab $active>시세</BottomTab>
        <BottomTab>뉴스/공시</BottomTab>
        <BottomTab>토론</BottomTab>
        <BottomTab>수익/노트</BottomTab>
        <BottomTab>종목정보</BottomTab>
      </BottomTabs>

      <NavBar>
        <NavSlot>
          <svg width="30" height="32" viewBox="0 0 30 32">
            <path d="M2 1v30M15 1v30M28 1v30" stroke="#8a8a8a" strokeWidth="3.4" strokeLinecap="round" />
          </svg>
        </NavSlot>
        <NavSlot>
          <svg width="34" height="34" viewBox="0 0 34 34">
            <rect x="2" y="2" width="30" height="30" rx="10" fill="none" stroke="#8a8a8a" strokeWidth="3.6" />
          </svg>
        </NavSlot>
        <NavSlot>
          <svg width="20" height="33" viewBox="0 0 20 33">
            <path d="M17 2L3 16.500 17 31" fill="none" stroke="#8a8a8a" strokeWidth="3.6" strokeLinecap="round" strokeLinejoin="round" />
          </svg>
        </NavSlot>
      </NavBar>
    </Page>
  );
}
